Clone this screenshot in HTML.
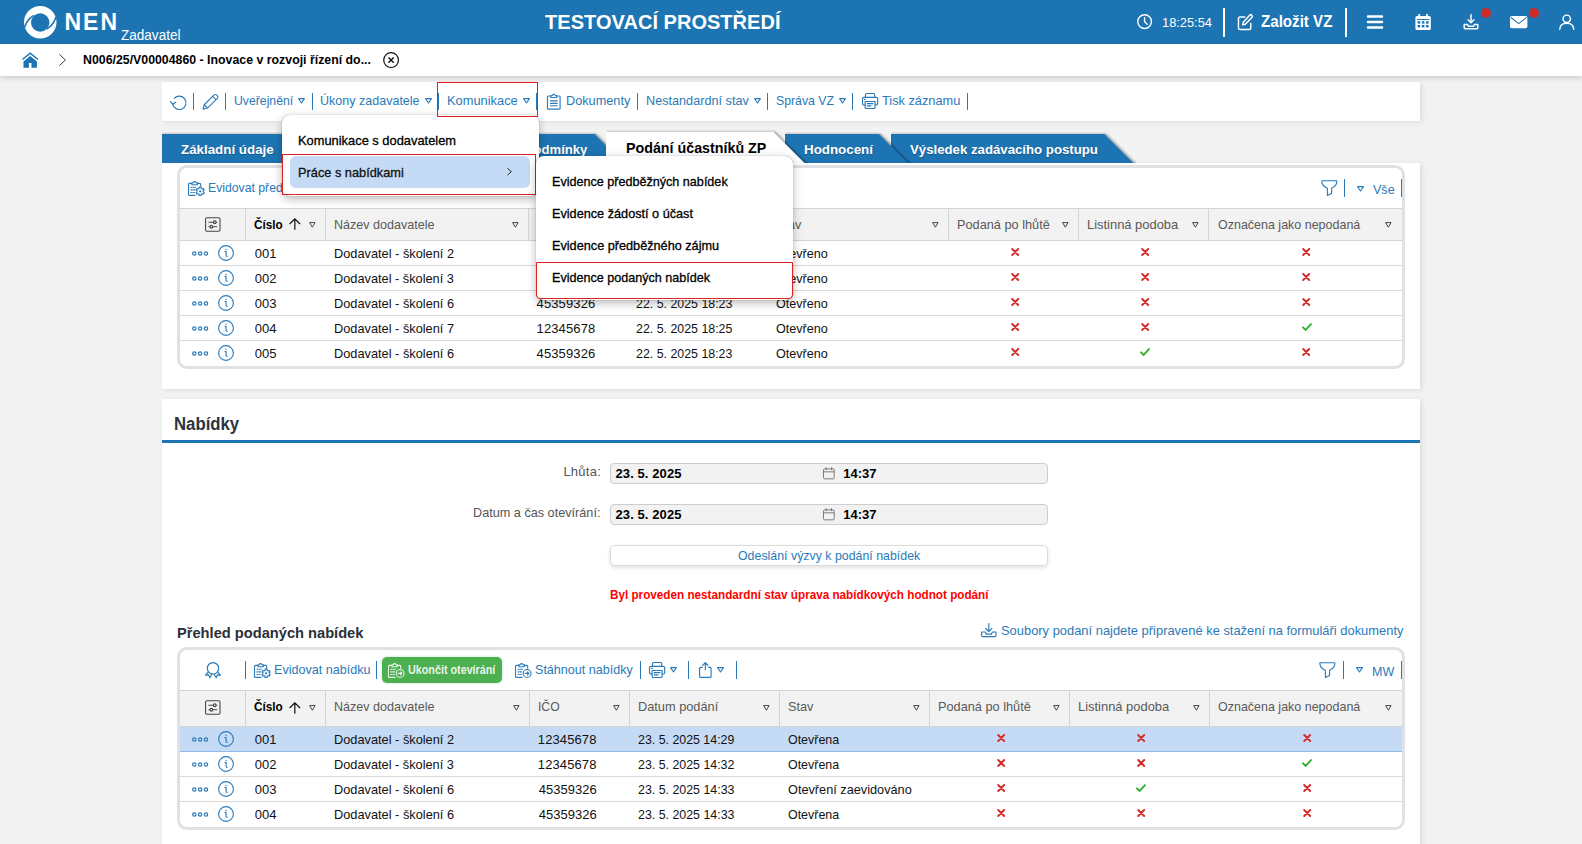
<!DOCTYPE html>
<html lang="cs"><head><meta charset="utf-8"><title>NEN</title>
<style>
*{box-sizing:border-box;margin:0;padding:0}
html,body{width:1582px;height:844px;overflow:hidden;background:#f2f2f2;font-family:"Liberation Sans",sans-serif;font-size:13px;color:#111}
.abs{position:absolute}
#hdr{position:absolute;left:0;top:0;width:1582px;height:44px;background:#1d74b3;color:#fff}
#bc{position:absolute;left:0;top:44px;width:1582px;height:32px;background:#fff;box-shadow:0 2px 5px rgba(0,0,0,.16)}
.t{position:absolute;white-space:nowrap;line-height:1;transform-origin:0 50%}
.panel{position:absolute;background:#fff;box-shadow:2px 1px 5px rgba(0,0,0,.09)}
.sep{position:absolute;width:1.3px;background:#2a7ab9}
.grid{position:absolute;border:3px solid #dfe1e4;border-radius:10px;background:#fff;overflow:hidden}
.gh{position:absolute;left:0;right:0;background:#f2f2f2;border-top:1px solid #d4d4d4;border-bottom:1px solid #d4d4d4}
.vl{position:absolute;width:1px;background:#d4d4d4}
.hl{position:absolute;left:0;right:0;height:1px;background:#d9d9d9}
svg{position:absolute;overflow:visible}
.menu{position:absolute;background:#fff;border-radius:8px;box-shadow:0 3px 10px rgba(0,0,0,.28),0 0 1px rgba(0,0,0,.45)}
.red{position:absolute;border:1px solid #e02020}
</style></head><body>
<div id="hdr"><svg style="left:23.800px;top:5.600px" width="32.500" height="32.500" viewBox="0 0 32.500 32.500">
<circle cx="16.250" cy="16.250" r="16.250" fill="#fff"/>
<circle cx="16.200" cy="16.450" r="9.250" fill="#1d74b3"/>
<path d="M-0.500 22.800C1 16.500 4.200 11.700 9.500 8.800L10.100 9.900C5.800 12.600 2.800 16.800 1.500 21.300z" fill="#1d74b3"/>
<path d="M33 9.700C31.500 16 28.300 20.800 23 23.700L22.400 22.600C26.700 19.900 29.700 15.700 31 11.200z" fill="#1d74b3"/>
</svg><div class="t" id="nen" style="left:64.4px;top:11px;font-size:23px;color:#fff;font-weight:bold;letter-spacing:2.069px;">NEN</div><div class="t" id="zad" style="left:121.3px;top:28px;font-size:14px;color:#fff;transform:scaleX(0.9674);">Zadavatel</div><div class="t" id="ttl" style="left:545.1px;top:12px;font-size:20px;color:#fff;font-weight:bold;letter-spacing:0.031px;">TESTOVACÍ PROSTŘEDÍ</div><svg style="left:1137.400px;top:14.100px" width="15.200" height="15.200" viewBox="0 0 16 16" fill="none" stroke="#fff" stroke-width="1.500"><circle cx="8" cy="8" r="7.200"/><path d="M8 3.800v4.400l2.800 2.600" stroke-linecap="round"/></svg><div class="t" id="clk" style="left:1161.5px;top:16px;font-size:13px;color:#fff;transform:scaleX(0.9866);">18:25:54</div><div class="abs" style="left:1223px;top:8px;width:2px;height:28.500px;background:#fff"></div><svg style="left:1237px;top:13.500px" width="16.500" height="16.500" viewBox="0 0 17 17" fill="none" stroke="#fff" stroke-width="1.500" stroke-linejoin="round" stroke-linecap="round"><path d="M8 3H3.200A1.700 1.700 0 0 0 1.500 4.700V14.300A1.700 1.700 0 0 0 3.200 16H12.500A1.700 1.700 0 0 0 14.200 14.300V9.500"/><path d="M13 1.200a1.500 1.500 0 0 1 2.300 2.300L8.600 10.500 5.800 11.200 6.500 8.400Z"/></svg><div class="t" id="zal" style="left:1260.7px;top:14px;font-size:16px;color:#fff;font-weight:bold;transform:scaleX(0.9455);">Založit VZ</div><div class="abs" style="left:1345px;top:8px;width:2px;height:28.500px;background:#fff"></div><svg style="left:1367px;top:15px" width="16" height="14" viewBox="0 0 16 14" stroke="#fff" stroke-width="2.500" stroke-linecap="round"><path d="M1 1.400h14M1 6.900h14M1 12.400h14"/></svg><svg style="left:1414.800px;top:13.900px" width="16.200" height="16" viewBox="0 0 16 16"><path d="M0.300 3.500a1.500 1.500 0 0 1 1.500-1.500H14.200a1.500 1.500 0 0 1 1.500 1.500V14.500a1.500 1.500 0 0 1-1.500 1.500H1.800a1.500 1.500 0 0 1-1.500-1.500z" fill="#fff"/><rect x="3.200" y="0" width="1.800" height="4" fill="#fff"/><rect x="11" y="0" width="1.800" height="4" fill="#fff"/><g fill="#1d74b3"><rect x="1.800" y="5" width="12.400" height="1"/><rect x="2.500" y="7.200" width="2.600" height="2.400"/><rect x="6.700" y="7.200" width="2.600" height="2.400"/><rect x="10.900" y="7.200" width="2.600" height="2.400"/><rect x="2.500" y="11" width="2.600" height="2.400"/><rect x="6.700" y="11" width="2.600" height="2.400"/><rect x="10.900" y="11" width="2.600" height="2.400"/></g></svg><svg style="left:1463px;top:14.200px" width="16" height="15.600" viewBox="0 0 16 16" fill="none" stroke="#fff" stroke-width="1.500" stroke-linecap="round" stroke-linejoin="round"><path d="M8 0.800v8M5 6l3 3 3-3"/><path d="M1 10.800v3a1.400 1.400 0 0 0 1.400 1.400h11.200a1.400 1.400 0 0 0 1.400-1.400v-3h-3.500l-1 1.800h-5l-1-1.800z"/></svg><div class="abs" style="left:1481px;top:8px;width:10.200px;height:10.200px;border-radius:6px;background:#cd2a2c"></div><svg style="left:1509.800px;top:15.800px" width="17.400" height="12.200" viewBox="0 0 18 12.500"><rect x="0" y="0" width="18" height="12.500" rx="1.800" fill="#fff"/><path d="M1 1.500l8 6.300 8-6.300" fill="none" stroke="#1d74b3" stroke-width="1.100"/></svg><div class="abs" style="left:1529px;top:8px;width:10.200px;height:10.200px;border-radius:6px;background:#cd2a2c"></div><svg style="left:1559px;top:14.200px" width="15.500" height="16" viewBox="0 0 16 16" fill="none" stroke="#fff" stroke-width="1.500" stroke-linecap="round"><circle cx="8" cy="4.700" r="3.800"/><path d="M0.800 15.500c0.200-4 3-6.300 7.200-6.300s7 2.300 7.200 6.300"/></svg></div><div id="bc"><svg style="left:22px;top:8px" width="16.400" height="16" viewBox="0 0 16.400 16"><path d="M1 7L8.200 1.200L15.400 7" fill="none" stroke="#1d74b3" stroke-width="1.600" stroke-linecap="round" stroke-linejoin="miter"/><path d="M1.500 9.400L8.200 4.100L14.900 9.400V15.800H9.500V11H6.900V15.800H1.500z" fill="#1d74b3"/></svg><svg style="left:59.200px;top:10.100px" width="7" height="11.900" viewBox="0 0 7 11.900" fill="none" stroke="#3a3a3a" stroke-width="1"><path d="M0.400 0.300l6 5.650-6 5.650"/></svg></div><div class="t" id="bct" style="left:82.6px;top:54px;font-size:12.5px;color:#000;font-weight:bold;transform:scaleX(0.9867);">N006/25/V00004860 - Inovace v rozvoji řízení do...</div><svg style="left:383.100px;top:51.700px" width="16.200" height="16.200" viewBox="0 0 16.200 16.200" fill="none" stroke="#111" stroke-width="1.200"><circle cx="8.100" cy="8.100" r="7.400"/><path d="M5.500 5.500l5.200 5.200M10.700 5.500l-5.200 5.200" stroke-width="1.400"/></svg><div class="panel" style="left:162px;top:82px;width:1258px;height:39px"></div><svg style="left:170px;top:94.500px" width="16.200" height="15" viewBox="0 0 16.200 15" fill="none" stroke="#2a7ab9" stroke-width="1.150" stroke-linecap="round" stroke-linejoin="round"><path d="M2.700 9.200A6.700 6.700 0 1 0 4.300 3.300"/><path d="M0.500 6.500l2.200 2.900 2.900-2.200"/></svg><svg style="left:201.700px;top:93.800px" width="16.500" height="16.200" viewBox="0 0 17 17" fill="none" stroke="#2a7ab9" stroke-width="1.150" stroke-linejoin="round"><path d="M1 16l1.200-4.700L12.500 1a1.800 1.800 0 0 1 2.600 0l0.900 0.900a1.800 1.800 0 0 1 0 2.600L5.700 14.800z"/><path d="M2.200 11.300l3.500 3.500M11 2.500l3.500 3.500"/></svg><div class="sep" style="left:192.75px;top:92.5px;height:17.5px"></div><div class="sep" style="left:224.85px;top:92.5px;height:17.5px"></div><div class="sep" style="left:311.55px;top:92.5px;height:17.5px"></div><div class="sep" style="left:437.75px;top:92.5px;height:17.5px"></div><div class="sep" style="left:535.85px;top:92.5px;height:17.5px"></div><div class="sep" style="left:636.75px;top:92.5px;height:17.5px"></div><div class="sep" style="left:766.85px;top:92.5px;height:17.5px"></div><div class="sep" style="left:852.05px;top:92.5px;height:17.5px"></div><div class="sep" style="left:967.15px;top:92.5px;height:17.5px"></div><div class="t" id="tb0" style="left:234.0px;top:94px;font-size:13px;color:#2a7ab9;transform:scaleX(0.9411);">Uveřejnění</div><svg style="left:297.8px;top:98.3px" width="7" height="5.6" viewBox="0 0 7 5.6" fill="none" stroke="#2a7ab9" stroke-width="1.1" stroke-linejoin="round"><path d="M0.600 0.600h5.80l-2.90 4.40z"/></svg><div class="t" id="tb1" style="left:320.3px;top:94px;font-size:13px;color:#2a7ab9;transform:scaleX(0.9637);">Úkony zadavatele</div><svg style="left:424.5px;top:98.3px" width="7" height="5.6" viewBox="0 0 7 5.6" fill="none" stroke="#2a7ab9" stroke-width="1.1" stroke-linejoin="round"><path d="M0.600 0.600h5.80l-2.90 4.40z"/></svg><div class="t" id="tb2" style="left:447.3px;top:94px;font-size:13px;color:#2a7ab9;transform:scaleX(0.9882);">Komunikace</div><svg style="left:522.8px;top:98.3px" width="7" height="5.6" viewBox="0 0 7 5.6" fill="none" stroke="#2a7ab9" stroke-width="1.1" stroke-linejoin="round"><path d="M0.600 0.600h5.80l-2.90 4.40z"/></svg><div class="t" id="tb3" style="left:566.4px;top:94px;font-size:13px;color:#2a7ab9;transform:scaleX(0.9777);">Dokumenty</div><div class="t" id="tb4" style="left:645.6px;top:94px;font-size:13px;color:#2a7ab9;transform:scaleX(0.9741);">Nestandardní stav</div><svg style="left:753.5px;top:98.3px" width="7" height="5.6" viewBox="0 0 7 5.6" fill="none" stroke="#2a7ab9" stroke-width="1.1" stroke-linejoin="round"><path d="M0.600 0.600h5.80l-2.90 4.40z"/></svg><div class="t" id="tb5" style="left:776.0px;top:94px;font-size:13px;color:#2a7ab9;transform:scaleX(0.9442);">Správa VZ</div><svg style="left:838.6px;top:98.3px" width="7" height="5.6" viewBox="0 0 7 5.6" fill="none" stroke="#2a7ab9" stroke-width="1.1" stroke-linejoin="round"><path d="M0.600 0.600h5.80l-2.90 4.40z"/></svg><div class="t" id="tb6" style="left:882.4px;top:94px;font-size:13px;color:#2a7ab9;transform:scaleX(0.9820);">Tisk záznamu</div><svg style="left:546.700px;top:92.800px" width="13.600" height="16.800" viewBox="0 0 14 17" fill="none" stroke="#2a7ab9" stroke-width="1.150" stroke-linejoin="round" stroke-linecap="round"><path d="M4 3H1.500a1 1 0 0 0-1 1V15.500a1 1 0 0 0 1 1h11a1 1 0 0 0 1-1V4a1 1 0 0 0-1-1H10"/><path d="M4 4.500V2.700L5.500 2.300a1.600 1.600 0 0 1 3 0L10 2.700v1.800z"/><path d="M3.500 8h7M3.500 10.500h7M3.500 13h7"/></svg><svg style="left:861.8px;top:93.2px" width="16.200" height="16" viewBox="0 0 16.200 16" fill="none" stroke="#2a7ab9" stroke-width="1.150" stroke-linejoin="round" stroke-linecap="round"><path d="M3.500 4.300V1.500a1 1 0 0 1 1-1h7.200a1 1 0 0 1 1 1V4.300"/><path d="M3.100 12H2a1.500 1.500 0 0 1-1.500-1.500V5.800A1.500 1.500 0 0 1 2 4.300H14.200a1.500 1.500 0 0 1 1.500 1.500V10.500A1.500 1.500 0 0 1 14.200 12H13.100"/><path d="M3.100 8.500h10v6a1 1 0 0 1-1 1H4.100a1 1 0 0 1-1-1z"/><path d="M5.200 10.700h5.800M5.200 12.900h3.800M2.500 6.400h0.600"/></svg><svg style="left:890.7px;top:134px" width="250.39999999999986" height="29" viewBox="0 0 250.39999999999986 29"><path d="M212.9 0H214.8L243.8 29H241.9z" fill="#000" opacity="0.26"/><path d="M214.3 0H216.2L245.2 29H243.3z" fill="#000" opacity="0.15"/><path d="M215.7 0H217.6L246.6 29H244.7z" fill="#000" opacity="0.07"/><path d="M1 -1.500H214.9L216.4 0H1z" fill="#5a4a40" opacity="0.200"/><path d="M0 0H213.39999999999986L242.39999999999986 29H0z" fill="#1d74b3"/></svg><div class="t" id="tab5" style="left:909.5px;top:143px;font-size:13.5px;color:#fff;font-weight:bold;transform:scaleX(0.9783);text-shadow:0 1px 1px rgba(0,0,0,.25);">Výsledek zadávacího postupu</div><svg style="left:784.5px;top:134px" width="131.0" height="29" viewBox="0 0 131.0 29"><path d="M93.5 0H95.4L124.4 29H122.5z" fill="#000" opacity="0.26"/><path d="M94.9 0H96.8L125.8 29H123.9z" fill="#000" opacity="0.15"/><path d="M96.3 0H98.2L127.2 29H125.3z" fill="#000" opacity="0.07"/><path d="M1 -1.500H95.5L97.0 0H1z" fill="#5a4a40" opacity="0.200"/><path d="M0 0H94.0L123.0 29H0z" fill="#1d74b3"/></svg><div class="t" id="tab4" style="left:804.4px;top:143px;font-size:13.5px;color:#fff;font-weight:bold;transform:scaleX(0.9889);text-shadow:0 1px 1px rgba(0,0,0,.25);">Hodnocení</div><svg style="left:400px;top:134px" width="231.60000000000002" height="29" viewBox="0 0 231.60000000000002 29"><path d="M194.1 0H196.0L225.0 29H223.1z" fill="#000" opacity="0.26"/><path d="M195.5 0H197.4L226.4 29H224.5z" fill="#000" opacity="0.15"/><path d="M196.9 0H198.8L227.8 29H225.9z" fill="#000" opacity="0.07"/><path d="M1 -1.500H196.1L197.6 0H1z" fill="#5a4a40" opacity="0.200"/><path d="M0 0H194.60000000000002L223.60000000000002 29H0z" fill="#1d74b3"/></svg><div class="t" id="tab2" style="left:466.3px;top:143px;font-size:13.5px;color:#fff;font-weight:bold;transform:scaleX(0.9680);text-shadow:0 1px 1px rgba(0,0,0,.25);">Zadávací podmínky</div><svg style="left:606px;top:132px" width="206.5" height="31" viewBox="0 0 206.5 31"><path d="M167.0 0H168.9L199.9 31H198.0z" fill="#000" opacity="0.26"/><path d="M168.4 0H170.3L201.3 31H199.4z" fill="#000" opacity="0.15"/><path d="M169.8 0H171.7L202.7 31H200.8z" fill="#000" opacity="0.07"/><path d="M1 -1.500H169.0L170.5 0H1z" fill="#5a4a40" opacity="0.200"/><path d="M0 0H167.5L198.5 31H0z" fill="#fff"/></svg><div class="t" id="tab3" style="left:625.9px;top:140px;font-size:15px;color:#000;font-weight:bold;transform:scaleX(0.9509);">Podání účastníků ZP</div><svg style="left:162px;top:134px" width="255" height="29" viewBox="0 0 255 29"><path d="M217.5 0H219.4L248.4 29H246.5z" fill="#000" opacity="0.26"/><path d="M218.9 0H220.8L249.8 29H247.9z" fill="#000" opacity="0.15"/><path d="M220.3 0H222.2L251.2 29H249.3z" fill="#000" opacity="0.07"/><path d="M1 -1.500H219.5L221.0 0H1z" fill="#5a4a40" opacity="0.200"/><path d="M0 0H218L247 29H0z" fill="#1d74b3"/></svg><div class="t" id="tab1" style="left:181.2px;top:143px;font-size:13.5px;color:#fff;font-weight:bold;transform:scaleX(0.9885);text-shadow:0 1px 1px rgba(0,0,0,.25);">Základní údaje</div><div class="panel" style="left:162px;top:163px;width:1258px;height:226px"></div><div class="grid" style="left:177px;top:165px;width:1228px;height:203.7px"><div class="gh" style="top:39.5px;height:33.30000000000001px"></div><div class="vl" style="left:64.9px;top:39.5px;height:33.30000000000001px"></div><div class="vl" style="left:144.7px;top:39.5px;height:33.30000000000001px"></div><div class="vl" style="left:347.8px;top:39.5px;height:33.30000000000001px"></div><div class="vl" style="left:447.5px;top:39.5px;height:33.30000000000001px"></div><div class="vl" style="left:587.5px;top:39.5px;height:33.30000000000001px"></div><div class="vl" style="left:768.1px;top:39.5px;height:33.30000000000001px"></div><div class="vl" style="left:897.7px;top:39.5px;height:33.30000000000001px"></div><div class="vl" style="left:1028.1px;top:39.5px;height:33.30000000000001px"></div><div class="hl" style="top:97.19999999999999px"></div><div class="hl" style="top:122.19999999999999px"></div><div class="hl" style="top:147.2px"></div><div class="hl" style="top:172.2px"></div></div><svg style="left:205.3px;top:216.55px" width="15.600" height="15" viewBox="0 0 16 15" fill="none" stroke="#444" stroke-width="1.100"><rect x="0.600" y="0.600" width="14.800" height="13.800" rx="1.500"/><path d="M3.500 5.200h9M3.500 9.800h9"/><circle cx="10" cy="5.200" r="1.400" fill="#f2f2f2"/><circle cx="6.500" cy="9.800" r="1.400" fill="#f2f2f2"/></svg><div class="t" id="ah0" style="left:253.7px;top:218px;font-size:13px;color:#000;font-weight:bold;transform:scaleX(0.9033);">Číslo</div><svg style="left:289px;top:218.25px" width="11.700" height="11.700" viewBox="0 0 11.700 11.700" fill="none" stroke="#111" stroke-width="1.200"><path d="M5.850 11.700V1M0.600 6l5.250-5.200 5.250 5.200"/></svg><svg style="left:308.8px;top:221.55px" width="6.7" height="5.8" viewBox="0 0 6.7 5.8" fill="none" stroke="#444" stroke-width="1" stroke-linejoin="round"><path d="M0.600 0.600h5.50l-2.75 4.60z"/></svg><div class="t" id="ah1" style="left:333.5px;top:218px;font-size:13px;color:#595959;transform:scaleX(0.9647);">Název dodavatele</div><svg style="left:511.69999999999993px;top:221.55px" width="6.7" height="5.8" viewBox="0 0 6.7 5.8" fill="none" stroke="#444" stroke-width="1" stroke-linejoin="round"><path d="M0.600 0.600h5.50l-2.75 4.60z"/></svg><div class="t" id="ah2" style="left:536.6px;top:218px;font-size:13px;color:#595959;transform:scaleX(0.9343);">IČO</div><svg style="left:611.4px;top:221.55px" width="6.7" height="5.8" viewBox="0 0 6.7 5.8" fill="none" stroke="#444" stroke-width="1" stroke-linejoin="round"><path d="M0.600 0.600h5.50l-2.75 4.60z"/></svg><div class="t" id="ah3" style="left:636.3px;top:218px;font-size:13px;color:#595959;transform:scaleX(0.9822);">Datum podání</div><svg style="left:751.4px;top:221.55px" width="6.7" height="5.8" viewBox="0 0 6.7 5.8" fill="none" stroke="#444" stroke-width="1" stroke-linejoin="round"><path d="M0.600 0.600h5.50l-2.75 4.60z"/></svg><div class="t" id="ah4" style="left:776.3px;top:218px;font-size:13px;color:#595959;transform:scaleX(0.9782);">Stav</div><svg style="left:932.0px;top:221.55px" width="6.7" height="5.8" viewBox="0 0 6.7 5.8" fill="none" stroke="#444" stroke-width="1" stroke-linejoin="round"><path d="M0.600 0.600h5.50l-2.75 4.60z"/></svg><div class="t" id="ah5" style="left:956.9px;top:218px;font-size:13px;color:#595959;transform:scaleX(0.9800);">Podaná po lhůtě</div><svg style="left:1061.6000000000001px;top:221.55px" width="6.7" height="5.8" viewBox="0 0 6.7 5.8" fill="none" stroke="#444" stroke-width="1" stroke-linejoin="round"><path d="M0.600 0.600h5.50l-2.75 4.60z"/></svg><div class="t" id="ah6" style="left:1086.5px;top:218px;font-size:13px;color:#595959;transform:scaleX(0.9939);">Listinná podoba</div><svg style="left:1192.0px;top:221.55px" width="6.7" height="5.8" viewBox="0 0 6.7 5.8" fill="none" stroke="#444" stroke-width="1" stroke-linejoin="round"><path d="M0.600 0.600h5.50l-2.75 4.60z"/></svg><div class="t" id="ah7" style="left:1217.9px;top:218px;font-size:13px;color:#595959;transform:scaleX(0.9602);">Označena jako nepodaná</div><svg style="left:1384.8000000000002px;top:221.55px" width="6.7" height="5.8" viewBox="0 0 6.7 5.8" fill="none" stroke="#444" stroke-width="1" stroke-linejoin="round"><path d="M0.600 0.600h5.50l-2.75 4.60z"/></svg><svg style="left:191.8px;top:250.95px" width="16.300" height="5" viewBox="0 0 16.300 5" fill="none" stroke="#2a7ab9" stroke-width="1.150"><circle cx="2.3" cy="2.500" r="1.700"/><circle cx="8.149999999999999" cy="2.500" r="1.700"/><circle cx="14.0" cy="2.500" r="1.700"/></svg><svg style="left:217.8px;top:244.95px" width="16" height="16" viewBox="0 0 16 16" fill="none" stroke="#2a7ab9" stroke-width="1.100"><circle cx="8" cy="8" r="7.400"/><path d="M7 6.600h1.100v3.900q0 0.900 1 0.900" stroke-linecap="round" stroke-linejoin="round"/><circle cx="8" cy="4.500" r="0.700" fill="#2a7ab9" stroke="none"/></svg><div class="t" id="ar0c0" style="left:254.7px;top:247px;font-size:13px;color:#111;">001</div><div class="t" id="ar0c1" style="left:333.5px;top:247px;font-size:13px;color:#111;transform:scaleX(0.9827);">Dodavatel - školení 2</div><div class="t" id="ar0c2" style="left:536.6px;top:247px;font-size:13px;color:#111;letter-spacing:0.109px;">12345678</div><div class="t" id="ar0c3" style="left:636.3px;top:247px;font-size:13px;color:#111;transform:scaleX(0.9522);">22. 5. 2025 18:20</div><div class="t" id="ar0c4" style="left:776.3px;top:247px;font-size:13px;color:#111;transform:scaleX(0.9691);">Otevřeno</div><svg style="left:1010.5000000000001px;top:248.45px" width="8.400" height="8" viewBox="0 0 8 8" stroke="#d32a2a" stroke-width="1.900" stroke-linecap="round"><path d="M1 1l6 6M7 1l-6 6"/></svg><svg style="left:1140.5px;top:248.45px" width="8.400" height="8" viewBox="0 0 8 8" stroke="#d32a2a" stroke-width="1.900" stroke-linecap="round"><path d="M1 1l6 6M7 1l-6 6"/></svg><svg style="left:1302.1px;top:248.45px" width="8.400" height="8" viewBox="0 0 8 8" stroke="#d32a2a" stroke-width="1.900" stroke-linecap="round"><path d="M1 1l6 6M7 1l-6 6"/></svg><svg style="left:191.8px;top:275.9px" width="16.300" height="5" viewBox="0 0 16.300 5" fill="none" stroke="#2a7ab9" stroke-width="1.150"><circle cx="2.3" cy="2.500" r="1.700"/><circle cx="8.149999999999999" cy="2.500" r="1.700"/><circle cx="14.0" cy="2.500" r="1.700"/></svg><svg style="left:217.8px;top:269.9px" width="16" height="16" viewBox="0 0 16 16" fill="none" stroke="#2a7ab9" stroke-width="1.100"><circle cx="8" cy="8" r="7.400"/><path d="M7 6.600h1.100v3.900q0 0.900 1 0.900" stroke-linecap="round" stroke-linejoin="round"/><circle cx="8" cy="4.500" r="0.700" fill="#2a7ab9" stroke="none"/></svg><div class="t" id="ar1c0" style="left:254.7px;top:272px;font-size:13px;color:#111;">002</div><div class="t" id="ar1c1" style="left:333.5px;top:272px;font-size:13px;color:#111;transform:scaleX(0.9816);">Dodavatel - školení 3</div><div class="t" id="ar1c2" style="left:536.6px;top:272px;font-size:13px;color:#111;letter-spacing:0.109px;">12345678</div><div class="t" id="ar1c3" style="left:636.3px;top:272px;font-size:13px;color:#111;transform:scaleX(0.9522);">22. 5. 2025 18:22</div><div class="t" id="ar1c4" style="left:776.3px;top:272px;font-size:13px;color:#111;transform:scaleX(0.9691);">Otevřeno</div><svg style="left:1010.5000000000001px;top:273.4px" width="8.400" height="8" viewBox="0 0 8 8" stroke="#d32a2a" stroke-width="1.900" stroke-linecap="round"><path d="M1 1l6 6M7 1l-6 6"/></svg><svg style="left:1140.5px;top:273.4px" width="8.400" height="8" viewBox="0 0 8 8" stroke="#d32a2a" stroke-width="1.900" stroke-linecap="round"><path d="M1 1l6 6M7 1l-6 6"/></svg><svg style="left:1302.1px;top:273.4px" width="8.400" height="8" viewBox="0 0 8 8" stroke="#d32a2a" stroke-width="1.900" stroke-linecap="round"><path d="M1 1l6 6M7 1l-6 6"/></svg><svg style="left:191.8px;top:300.9px" width="16.300" height="5" viewBox="0 0 16.300 5" fill="none" stroke="#2a7ab9" stroke-width="1.150"><circle cx="2.3" cy="2.500" r="1.700"/><circle cx="8.149999999999999" cy="2.500" r="1.700"/><circle cx="14.0" cy="2.500" r="1.700"/></svg><svg style="left:217.8px;top:294.9px" width="16" height="16" viewBox="0 0 16 16" fill="none" stroke="#2a7ab9" stroke-width="1.100"><circle cx="8" cy="8" r="7.400"/><path d="M7 6.600h1.100v3.900q0 0.900 1 0.900" stroke-linecap="round" stroke-linejoin="round"/><circle cx="8" cy="4.500" r="0.700" fill="#2a7ab9" stroke="none"/></svg><div class="t" id="ar2c0" style="left:254.7px;top:297px;font-size:13px;color:#111;">003</div><div class="t" id="ar2c1" style="left:333.5px;top:297px;font-size:13px;color:#111;transform:scaleX(0.9833);">Dodavatel - školení 6</div><div class="t" id="ar2c2" style="left:536.6px;top:297px;font-size:13px;color:#111;letter-spacing:0.109px;">45359326</div><div class="t" id="ar2c3" style="left:636.3px;top:297px;font-size:13px;color:#111;transform:scaleX(0.9522);">22. 5. 2025 18:23</div><div class="t" id="ar2c4" style="left:776.3px;top:297px;font-size:13px;color:#111;transform:scaleX(0.9691);">Otevřeno</div><svg style="left:1010.5000000000001px;top:298.4px" width="8.400" height="8" viewBox="0 0 8 8" stroke="#d32a2a" stroke-width="1.900" stroke-linecap="round"><path d="M1 1l6 6M7 1l-6 6"/></svg><svg style="left:1140.5px;top:298.4px" width="8.400" height="8" viewBox="0 0 8 8" stroke="#d32a2a" stroke-width="1.900" stroke-linecap="round"><path d="M1 1l6 6M7 1l-6 6"/></svg><svg style="left:1302.1px;top:298.4px" width="8.400" height="8" viewBox="0 0 8 8" stroke="#d32a2a" stroke-width="1.900" stroke-linecap="round"><path d="M1 1l6 6M7 1l-6 6"/></svg><svg style="left:191.8px;top:325.9px" width="16.300" height="5" viewBox="0 0 16.300 5" fill="none" stroke="#2a7ab9" stroke-width="1.150"><circle cx="2.3" cy="2.500" r="1.700"/><circle cx="8.149999999999999" cy="2.500" r="1.700"/><circle cx="14.0" cy="2.500" r="1.700"/></svg><svg style="left:217.8px;top:319.9px" width="16" height="16" viewBox="0 0 16 16" fill="none" stroke="#2a7ab9" stroke-width="1.100"><circle cx="8" cy="8" r="7.400"/><path d="M7 6.600h1.100v3.900q0 0.900 1 0.900" stroke-linecap="round" stroke-linejoin="round"/><circle cx="8" cy="4.500" r="0.700" fill="#2a7ab9" stroke="none"/></svg><div class="t" id="ar3c0" style="left:254.7px;top:322px;font-size:13px;color:#111;">004</div><div class="t" id="ar3c1" style="left:333.5px;top:322px;font-size:13px;color:#111;transform:scaleX(0.9827);">Dodavatel - školení 7</div><div class="t" id="ar3c2" style="left:536.6px;top:322px;font-size:13px;color:#111;letter-spacing:0.109px;">12345678</div><div class="t" id="ar3c3" style="left:636.3px;top:322px;font-size:13px;color:#111;transform:scaleX(0.9522);">22. 5. 2025 18:25</div><div class="t" id="ar3c4" style="left:776.3px;top:322px;font-size:13px;color:#111;transform:scaleX(0.9691);">Otevřeno</div><svg style="left:1010.5000000000001px;top:323.4px" width="8.400" height="8" viewBox="0 0 8 8" stroke="#d32a2a" stroke-width="1.900" stroke-linecap="round"><path d="M1 1l6 6M7 1l-6 6"/></svg><svg style="left:1140.5px;top:323.4px" width="8.400" height="8" viewBox="0 0 8 8" stroke="#d32a2a" stroke-width="1.900" stroke-linecap="round"><path d="M1 1l6 6M7 1l-6 6"/></svg><svg style="left:1301.8px;top:323.4px" width="10" height="8" viewBox="0 0 10 8" fill="none" stroke="#2fb12f" stroke-width="1.900" stroke-linecap="round"><path d="M1 4.300l2.600 2.600 5.400-5.800"/></svg><svg style="left:191.8px;top:350.9px" width="16.300" height="5" viewBox="0 0 16.300 5" fill="none" stroke="#2a7ab9" stroke-width="1.150"><circle cx="2.3" cy="2.500" r="1.700"/><circle cx="8.149999999999999" cy="2.500" r="1.700"/><circle cx="14.0" cy="2.500" r="1.700"/></svg><svg style="left:217.8px;top:344.9px" width="16" height="16" viewBox="0 0 16 16" fill="none" stroke="#2a7ab9" stroke-width="1.100"><circle cx="8" cy="8" r="7.400"/><path d="M7 6.600h1.100v3.900q0 0.900 1 0.900" stroke-linecap="round" stroke-linejoin="round"/><circle cx="8" cy="4.500" r="0.700" fill="#2a7ab9" stroke="none"/></svg><div class="t" id="ar4c0" style="left:254.7px;top:347px;font-size:13px;color:#111;">005</div><div class="t" id="ar4c1" style="left:333.5px;top:347px;font-size:13px;color:#111;transform:scaleX(0.9833);">Dodavatel - školení 6</div><div class="t" id="ar4c2" style="left:536.6px;top:347px;font-size:13px;color:#111;letter-spacing:0.109px;">45359326</div><div class="t" id="ar4c3" style="left:636.3px;top:347px;font-size:13px;color:#111;transform:scaleX(0.9522);">22. 5. 2025 18:23</div><div class="t" id="ar4c4" style="left:776.3px;top:347px;font-size:13px;color:#111;transform:scaleX(0.9691);">Otevřeno</div><svg style="left:1010.5000000000001px;top:348.4px" width="8.400" height="8" viewBox="0 0 8 8" stroke="#d32a2a" stroke-width="1.900" stroke-linecap="round"><path d="M1 1l6 6M7 1l-6 6"/></svg><svg style="left:1140.2px;top:348.4px" width="10" height="8" viewBox="0 0 10 8" fill="none" stroke="#2fb12f" stroke-width="1.900" stroke-linecap="round"><path d="M1 4.300l2.600 2.600 5.400-5.800"/></svg><svg style="left:1302.1px;top:348.4px" width="8.400" height="8" viewBox="0 0 8 8" stroke="#d32a2a" stroke-width="1.900" stroke-linecap="round"><path d="M1 1l6 6M7 1l-6 6"/></svg><svg style="left:187.8px;top:180px;color:#2a7ab9" width="17" height="17" viewBox="0 0 17 17" fill="none" stroke="#2a7ab9" stroke-width="1.100" stroke-linejoin="round" stroke-linecap="round"><path d="M9.300 3.400H11.700a1 1 0 0 1 1 1V6.300M7 15.400H1.500a1 1 0 0 1-1-1V4.400a1 1 0 0 1 1-1H3.900"/><path d="M3.900 4.700V2.900L5.300 2.500a1.400 1.400 0 0 1 2.600 0L9.300 2.900V4.700z"/><path d="M2.900 7.300h0.700M4.800 7.300h2.600M2.900 9.900h0.700M4.800 9.900h1.800M2.900 12.500h0.700M4.800 12.500h1.400"/><path d="M11.12 7.11L13.08 7.11L13.12 8.37L14.13 8.95L15.23 8.36L16.22 10.06L15.15 10.72L15.15 11.88L16.22 12.54L15.23 14.24L14.13 13.65L13.12 14.23L13.08 15.49L11.12 15.49L11.08 14.23L10.07 13.65L8.97 14.24L7.98 12.54L9.05 11.88L9.05 10.72L7.98 10.06L8.97 8.36L10.07 8.95L11.08 8.37z"/><circle cx="12.100" cy="11.300" r="1.100" fill="currentColor" stroke="none"/></svg><div class="t" id="ev1" style="left:207.7px;top:181px;font-size:13px;color:#2a7ab9;transform:scaleX(0.9403);">Evidovat předběžnou nabídku</div><svg style="left:1320.6px;top:179.5px" width="16.700" height="16" viewBox="0 0 16.700 16" fill="none" stroke="#2a7ab9" stroke-width="1.100" stroke-linejoin="round"><path d="M1.300 0.700H15.400a0.500 0.500 0 0 1 0.500 0.600C15.800 5.200 12.600 7.400 10.600 8.300V13.600L6.400 15.500V8.300C4.100 7.400 0.900 5.200 0.800 1.300a0.500 0.500 0 0 1 0.500-0.600z"/></svg><div class="sep" style="left:1343.95px;top:179px;height:17.5px"></div><svg style="left:1357.4px;top:185.5px" width="7" height="5.6" viewBox="0 0 7 5.6" fill="none" stroke="#2a7ab9" stroke-width="1.1" stroke-linejoin="round"><path d="M0.600 0.600h5.80l-2.90 4.40z"/></svg><div class="t" id="vse" style="left:1373.3px;top:183px;font-size:13px;color:#2a7ab9;transform:scaleX(0.9642);">Vše</div><div class="sep" style="left:1400.75px;top:179px;height:17.5px"></div><div class="panel" style="left:162px;top:399px;width:1258px;height:460px"></div><div class="t" id="nab" style="left:173.9px;top:415px;font-size:18px;color:#2b3440;font-weight:bold;transform:scaleX(0.9305);">Nabídky</div><div class="abs" style="left:162px;top:440px;width:1258px;height:3px;background:#1d74b3"></div><div class="t" id="l1" style="left:563.4px;top:465px;font-size:13px;color:#555;letter-spacing:0.247px;">Lhůta:</div><div class="abs" style="left:610.200px;top:463px;width:437.500px;height:21px;background:#f2f2f2;border:1px solid #cdcdcd;border-radius:4px"></div><div class="t" id="l1d" style="left:615.5px;top:467px;font-size:13px;color:#000;font-weight:bold;letter-spacing:0.090px;">23. 5. 2025</div><svg style="left:823.300px;top:467px" width="11.700" height="12.500" viewBox="0 0 12 12.500" fill="none" stroke="#777" stroke-width="1"><rect x="0.500" y="1.800" width="11" height="10.200" rx="1.200"/><path d="M0.500 4.800h11M3.300 0v3M8.700 0v3"/></svg><div class="t" id="l1t" style="left:843.2px;top:467px;font-size:13px;color:#000;font-weight:bold;letter-spacing:0.037px;">14:37</div><div class="t" id="l2" style="left:472.9px;top:506px;font-size:13px;color:#555;transform:scaleX(0.9743);">Datum a čas otevírání:</div><div class="abs" style="left:610.200px;top:504px;width:437.500px;height:21px;background:#f2f2f2;border:1px solid #cdcdcd;border-radius:4px"></div><div class="t" id="l2d" style="left:615.5px;top:508px;font-size:13px;color:#000;font-weight:bold;letter-spacing:0.090px;">23. 5. 2025</div><svg style="left:823.300px;top:508px" width="11.700" height="12.500" viewBox="0 0 12 12.500" fill="none" stroke="#777" stroke-width="1"><rect x="0.500" y="1.800" width="11" height="10.200" rx="1.200"/><path d="M0.500 4.800h11M3.300 0v3M8.700 0v3"/></svg><div class="t" id="l2t" style="left:843.2px;top:508px;font-size:13px;color:#000;font-weight:bold;letter-spacing:0.037px;">14:37</div><div class="abs" style="left:610.200px;top:545px;width:437.500px;height:21px;background:#fff;border:1px solid #dcdcdc;border-radius:5px;box-shadow:0 2px 4px rgba(0,0,0,.12)"></div><div class="t" id="ode" style="left:737.7px;top:549px;font-size:13px;color:#2a7ab9;transform:scaleX(0.9516);">Odeslání výzvy k podání nabídek</div><div class="t" id="byl" style="left:609.8px;top:589px;font-size:12.5px;color:#f00;font-weight:bold;transform:scaleX(0.9364);">Byl proveden nestandardní stav úprava nabídkových hodnot podání</div><div class="t" id="pre" style="left:176.8px;top:625px;font-size:15px;color:#2a3038;font-weight:bold;transform:scaleX(0.9765);">Přehled podaných nabídek</div><svg style="left:981.100px;top:623.300px" width="15.600" height="14.300" viewBox="0 0 15.600 13.500" preserveAspectRatio="none" fill="none" stroke="#2a7ab9" stroke-width="1.100" stroke-linecap="round" stroke-linejoin="round"><path d="M7.800 0.500v7.500M4.800 5.200l3 3 3-3"/><path d="M0.600 8.500v3.400a1 1 0 0 0 1 1h12.400a1 1 0 0 0 1-1v-3.400h-3.600l-1 2h-5.200l-1-2z"/></svg><div class="t" id="sou" style="left:1000.5px;top:624px;font-size:13px;color:#2a7ab9;transform:scaleX(0.9926);">Soubory podaní najdete připravené ke stažení na formuláři dokumenty</div><div class="grid" style="left:177px;top:647px;width:1228px;height:182.5px"><div class="gh" style="top:39.5px;height:37.0px"></div><div class="vl" style="left:64.9px;top:39.5px;height:37.0px"></div><div class="vl" style="left:144.7px;top:39.5px;height:37.0px"></div><div class="vl" style="left:349.0px;top:39.5px;height:37.0px"></div><div class="vl" style="left:448.8px;top:39.5px;height:37.0px"></div><div class="vl" style="left:599.0px;top:39.5px;height:37.0px"></div><div class="vl" style="left:749.3px;top:39.5px;height:37.0px"></div><div class="vl" style="left:889.1px;top:39.5px;height:37.0px"></div><div class="vl" style="left:1029.0px;top:39.5px;height:37.0px"></div><div class="abs" style="left:0;right:0;top:76.5px;height:25.5px;background:#c5daf5;border-bottom:1px solid #93b9ea"></div><div class="hl" style="top:126.0px"></div><div class="hl" style="top:151.0px"></div></div><svg style="left:205.3px;top:700.4px" width="15.600" height="15" viewBox="0 0 16 15" fill="none" stroke="#444" stroke-width="1.100"><rect x="0.600" y="0.600" width="14.800" height="13.800" rx="1.500"/><path d="M3.500 5.200h9M3.500 9.800h9"/><circle cx="10" cy="5.200" r="1.400" fill="#f2f2f2"/><circle cx="6.500" cy="9.800" r="1.400" fill="#f2f2f2"/></svg><div class="t" id="bh0" style="left:253.7px;top:700px;font-size:13px;color:#000;font-weight:bold;transform:scaleX(0.9033);">Číslo</div><svg style="left:289px;top:702.1px" width="11.700" height="11.700" viewBox="0 0 11.700 11.700" fill="none" stroke="#111" stroke-width="1.200"><path d="M5.850 11.700V1M0.600 6l5.250-5.200 5.250 5.200"/></svg><svg style="left:308.8px;top:705.4px" width="6.7" height="5.8" viewBox="0 0 6.7 5.8" fill="none" stroke="#444" stroke-width="1" stroke-linejoin="round"><path d="M0.600 0.600h5.50l-2.75 4.60z"/></svg><div class="t" id="bh1" style="left:333.5px;top:700px;font-size:13px;color:#595959;transform:scaleX(0.9647);">Název dodavatele</div><svg style="left:512.9px;top:705.4px" width="6.7" height="5.8" viewBox="0 0 6.7 5.8" fill="none" stroke="#444" stroke-width="1" stroke-linejoin="round"><path d="M0.600 0.600h5.50l-2.75 4.60z"/></svg><div class="t" id="bh2" style="left:537.8px;top:700px;font-size:13px;color:#595959;transform:scaleX(0.9343);">IČO</div><svg style="left:612.6999999999999px;top:705.4px" width="6.7" height="5.8" viewBox="0 0 6.7 5.8" fill="none" stroke="#444" stroke-width="1" stroke-linejoin="round"><path d="M0.600 0.600h5.50l-2.75 4.60z"/></svg><div class="t" id="bh3" style="left:637.6px;top:700px;font-size:13px;color:#595959;transform:scaleX(0.9822);">Datum podání</div><svg style="left:762.9px;top:705.4px" width="6.7" height="5.8" viewBox="0 0 6.7 5.8" fill="none" stroke="#444" stroke-width="1" stroke-linejoin="round"><path d="M0.600 0.600h5.50l-2.75 4.60z"/></svg><div class="t" id="bh4" style="left:787.8px;top:700px;font-size:13px;color:#595959;transform:scaleX(0.9782);">Stav</div><svg style="left:913.1999999999999px;top:705.4px" width="6.7" height="5.8" viewBox="0 0 6.7 5.8" fill="none" stroke="#444" stroke-width="1" stroke-linejoin="round"><path d="M0.600 0.600h5.50l-2.75 4.60z"/></svg><div class="t" id="bh5" style="left:938.1px;top:700px;font-size:13px;color:#595959;transform:scaleX(0.9800);">Podaná po lhůtě</div><svg style="left:1053.0px;top:705.4px" width="6.7" height="5.8" viewBox="0 0 6.7 5.8" fill="none" stroke="#444" stroke-width="1" stroke-linejoin="round"><path d="M0.600 0.600h5.50l-2.75 4.60z"/></svg><div class="t" id="bh6" style="left:1077.9px;top:700px;font-size:13px;color:#595959;transform:scaleX(0.9939);">Listinná podoba</div><svg style="left:1192.9px;top:705.4px" width="6.7" height="5.8" viewBox="0 0 6.7 5.8" fill="none" stroke="#444" stroke-width="1" stroke-linejoin="round"><path d="M0.600 0.600h5.50l-2.75 4.60z"/></svg><div class="t" id="bh7" style="left:1217.8px;top:700px;font-size:13px;color:#595959;transform:scaleX(0.9602);">Označena jako nepodaná</div><svg style="left:1384.8000000000002px;top:705.4px" width="6.7" height="5.8" viewBox="0 0 6.7 5.8" fill="none" stroke="#444" stroke-width="1" stroke-linejoin="round"><path d="M0.600 0.600h5.50l-2.75 4.60z"/></svg><svg style="left:191.8px;top:736.7px" width="16.300" height="5" viewBox="0 0 16.300 5" fill="none" stroke="#2a7ab9" stroke-width="1.150"><circle cx="2.3" cy="2.500" r="1.700"/><circle cx="8.149999999999999" cy="2.500" r="1.700"/><circle cx="14.0" cy="2.500" r="1.700"/></svg><svg style="left:217.8px;top:730.7px" width="16" height="16" viewBox="0 0 16 16" fill="none" stroke="#2a7ab9" stroke-width="1.100"><circle cx="8" cy="8" r="7.400"/><path d="M7 6.600h1.100v3.900q0 0.900 1 0.900" stroke-linecap="round" stroke-linejoin="round"/><circle cx="8" cy="4.500" r="0.700" fill="#2a7ab9" stroke="none"/></svg><div class="t" id="br0c0" style="left:254.7px;top:733px;font-size:13px;color:#111;">001</div><div class="t" id="br0c1" style="left:333.5px;top:733px;font-size:13px;color:#111;transform:scaleX(0.9830);">Dodavatel - školení 2</div><div class="t" id="br0c2" style="left:537.8px;top:733px;font-size:13px;color:#111;letter-spacing:0.106px;">12345678</div><div class="t" id="br0c3" style="left:637.6px;top:733px;font-size:13px;color:#111;transform:scaleX(0.9520);">23. 5. 2025 14:29</div><div class="t" id="br0c4" style="left:787.8px;top:733px;font-size:13px;color:#111;transform:scaleX(0.9559);">Otevřena</div><svg style="left:996.8px;top:734.2px" width="8.400" height="8" viewBox="0 0 8 8" stroke="#d32a2a" stroke-width="1.900" stroke-linecap="round"><path d="M1 1l6 6M7 1l-6 6"/></svg><svg style="left:1136.6499999999999px;top:734.2px" width="8.400" height="8" viewBox="0 0 8 8" stroke="#d32a2a" stroke-width="1.900" stroke-linecap="round"><path d="M1 1l6 6M7 1l-6 6"/></svg><svg style="left:1302.55px;top:734.2px" width="8.400" height="8" viewBox="0 0 8 8" stroke="#d32a2a" stroke-width="1.900" stroke-linecap="round"><path d="M1 1l6 6M7 1l-6 6"/></svg><svg style="left:191.8px;top:761.7px" width="16.300" height="5" viewBox="0 0 16.300 5" fill="none" stroke="#2a7ab9" stroke-width="1.150"><circle cx="2.3" cy="2.500" r="1.700"/><circle cx="8.149999999999999" cy="2.500" r="1.700"/><circle cx="14.0" cy="2.500" r="1.700"/></svg><svg style="left:217.8px;top:755.7px" width="16" height="16" viewBox="0 0 16 16" fill="none" stroke="#2a7ab9" stroke-width="1.100"><circle cx="8" cy="8" r="7.400"/><path d="M7 6.600h1.100v3.900q0 0.900 1 0.900" stroke-linecap="round" stroke-linejoin="round"/><circle cx="8" cy="4.500" r="0.700" fill="#2a7ab9" stroke="none"/></svg><div class="t" id="br1c0" style="left:254.7px;top:758px;font-size:13px;color:#111;">002</div><div class="t" id="br1c1" style="left:333.5px;top:758px;font-size:13px;color:#111;transform:scaleX(0.9816);">Dodavatel - školení 3</div><div class="t" id="br1c2" style="left:537.8px;top:758px;font-size:13px;color:#111;letter-spacing:0.109px;">12345678</div><div class="t" id="br1c3" style="left:637.6px;top:758px;font-size:13px;color:#111;transform:scaleX(0.9522);">23. 5. 2025 14:32</div><div class="t" id="br1c4" style="left:787.8px;top:758px;font-size:13px;color:#111;transform:scaleX(0.9562);">Otevřena</div><svg style="left:996.8px;top:759.2px" width="8.400" height="8" viewBox="0 0 8 8" stroke="#d32a2a" stroke-width="1.900" stroke-linecap="round"><path d="M1 1l6 6M7 1l-6 6"/></svg><svg style="left:1136.6499999999999px;top:759.2px" width="8.400" height="8" viewBox="0 0 8 8" stroke="#d32a2a" stroke-width="1.900" stroke-linecap="round"><path d="M1 1l6 6M7 1l-6 6"/></svg><svg style="left:1302.25px;top:759.2px" width="10" height="8" viewBox="0 0 10 8" fill="none" stroke="#2fb12f" stroke-width="1.900" stroke-linecap="round"><path d="M1 4.300l2.600 2.600 5.400-5.800"/></svg><svg style="left:191.8px;top:786.7px" width="16.300" height="5" viewBox="0 0 16.300 5" fill="none" stroke="#2a7ab9" stroke-width="1.150"><circle cx="2.3" cy="2.500" r="1.700"/><circle cx="8.149999999999999" cy="2.500" r="1.700"/><circle cx="14.0" cy="2.500" r="1.700"/></svg><svg style="left:217.8px;top:780.7px" width="16" height="16" viewBox="0 0 16 16" fill="none" stroke="#2a7ab9" stroke-width="1.100"><circle cx="8" cy="8" r="7.400"/><path d="M7 6.600h1.100v3.900q0 0.900 1 0.900" stroke-linecap="round" stroke-linejoin="round"/><circle cx="8" cy="4.500" r="0.700" fill="#2a7ab9" stroke="none"/></svg><div class="t" id="br2c0" style="left:254.7px;top:783px;font-size:13px;color:#111;">003</div><div class="t" id="br2c1" style="left:333.5px;top:783px;font-size:13px;color:#111;transform:scaleX(0.9833);">Dodavatel - školení 6</div><div class="t" id="br2c2" style="left:538.8px;top:783px;font-size:13px;color:#111;letter-spacing:0.007px;">45359326</div><div class="t" id="br2c3" style="left:637.6px;top:783px;font-size:13px;color:#111;transform:scaleX(0.9529);">23. 5. 2025 14:33</div><div class="t" id="br2c4" style="left:787.8px;top:783px;font-size:13px;color:#111;transform:scaleX(0.9787);">Otevření zaevidováno</div><svg style="left:996.8px;top:784.2px" width="8.400" height="8" viewBox="0 0 8 8" stroke="#d32a2a" stroke-width="1.900" stroke-linecap="round"><path d="M1 1l6 6M7 1l-6 6"/></svg><svg style="left:1136.35px;top:784.2px" width="10" height="8" viewBox="0 0 10 8" fill="none" stroke="#2fb12f" stroke-width="1.900" stroke-linecap="round"><path d="M1 4.300l2.600 2.600 5.400-5.800"/></svg><svg style="left:1302.55px;top:784.2px" width="8.400" height="8" viewBox="0 0 8 8" stroke="#d32a2a" stroke-width="1.900" stroke-linecap="round"><path d="M1 1l6 6M7 1l-6 6"/></svg><svg style="left:191.8px;top:811.7px" width="16.300" height="5" viewBox="0 0 16.300 5" fill="none" stroke="#2a7ab9" stroke-width="1.150"><circle cx="2.3" cy="2.500" r="1.700"/><circle cx="8.149999999999999" cy="2.500" r="1.700"/><circle cx="14.0" cy="2.500" r="1.700"/></svg><svg style="left:217.8px;top:805.7px" width="16" height="16" viewBox="0 0 16 16" fill="none" stroke="#2a7ab9" stroke-width="1.100"><circle cx="8" cy="8" r="7.400"/><path d="M7 6.600h1.100v3.900q0 0.900 1 0.900" stroke-linecap="round" stroke-linejoin="round"/><circle cx="8" cy="4.500" r="0.700" fill="#2a7ab9" stroke="none"/></svg><div class="t" id="br3c0" style="left:254.7px;top:808px;font-size:13px;color:#111;">004</div><div class="t" id="br3c1" style="left:333.5px;top:808px;font-size:13px;color:#111;transform:scaleX(0.9833);">Dodavatel - školení 6</div><div class="t" id="br3c2" style="left:538.8px;top:808px;font-size:13px;color:#111;letter-spacing:0.007px;">45359326</div><div class="t" id="br3c3" style="left:637.6px;top:808px;font-size:13px;color:#111;transform:scaleX(0.9529);">23. 5. 2025 14:33</div><div class="t" id="br3c4" style="left:787.8px;top:808px;font-size:13px;color:#111;transform:scaleX(0.9562);">Otevřena</div><svg style="left:996.8px;top:809.2px" width="8.400" height="8" viewBox="0 0 8 8" stroke="#d32a2a" stroke-width="1.900" stroke-linecap="round"><path d="M1 1l6 6M7 1l-6 6"/></svg><svg style="left:1136.6499999999999px;top:809.2px" width="8.400" height="8" viewBox="0 0 8 8" stroke="#d32a2a" stroke-width="1.900" stroke-linecap="round"><path d="M1 1l6 6M7 1l-6 6"/></svg><svg style="left:1302.55px;top:809.2px" width="8.400" height="8" viewBox="0 0 8 8" stroke="#d32a2a" stroke-width="1.900" stroke-linecap="round"><path d="M1 1l6 6M7 1l-6 6"/></svg><svg style="left:205.100px;top:661.900px" width="16" height="16" viewBox="0 0 16 16" fill="none" stroke="#2a7ab9" stroke-width="1.150" stroke-linejoin="round"><circle cx="8" cy="6.300" r="5.700"/><path d="M3.300 9.800L0.600 13.100l3.100-0.200 1.100 2.900 2.400-4M12.700 9.800l2.700 3.300-3.100-0.200-1.100 2.900-2.400-4"/></svg><div class="sep" style="left:244.75px;top:661px;height:17.5px"></div><div class="sep" style="left:375.75px;top:661px;height:17.5px"></div><div class="sep" style="left:639.85px;top:661px;height:17.5px"></div><div class="sep" style="left:687.95px;top:661px;height:17.5px"></div><div class="sep" style="left:735.75px;top:661px;height:17.5px"></div><svg style="left:253.8px;top:662px;color:#2a7ab9" width="17" height="17" viewBox="0 0 17 17" fill="none" stroke="#2a7ab9" stroke-width="1.100" stroke-linejoin="round" stroke-linecap="round"><path d="M9.300 3.400H11.700a1 1 0 0 1 1 1V6.300M7 15.400H1.500a1 1 0 0 1-1-1V4.400a1 1 0 0 1 1-1H3.900"/><path d="M3.900 4.700V2.900L5.300 2.500a1.400 1.400 0 0 1 2.600 0L9.300 2.900V4.700z"/><path d="M2.900 7.300h0.700M4.800 7.300h2.600M2.900 9.900h0.700M4.800 9.900h1.800M2.900 12.500h0.700M4.800 12.500h1.400"/><path d="M11.12 7.11L13.08 7.11L13.12 8.37L14.13 8.95L15.23 8.36L16.22 10.06L15.15 10.72L15.15 11.88L16.22 12.54L15.23 14.24L14.13 13.65L13.12 14.23L13.08 15.49L11.12 15.49L11.08 14.23L10.07 13.65L8.97 14.24L7.98 12.54L9.05 11.88L9.05 10.72L7.98 10.06L8.97 8.36L10.07 8.95L11.08 8.37z"/><circle cx="12.100" cy="11.300" r="1.100" fill="currentColor" stroke="none"/></svg><div class="t" id="ev2" style="left:273.6px;top:663px;font-size:13px;color:#2a7ab9;transform:scaleX(0.9676);">Evidovat nabídku</div><div class="abs" style="left:382px;top:657.300px;width:120.400px;height:25.600px;background:#4caf50;border-radius:5px;box-shadow:0 0 0 1.5px rgba(76,175,80,.13)"></div><svg style="left:388.3px;top:662px" width="17" height="17" viewBox="0 0 17 17" fill="none" stroke="rgba(255,255,255,.9)" stroke-width="1.100" stroke-linejoin="round" stroke-linecap="round"><path d="M9.300 3.400H11.700a1 1 0 0 1 1 1V6.300M7 15.400H1.500a1 1 0 0 1-1-1V4.400a1 1 0 0 1 1-1H3.900"/><path d="M3.900 4.700V2.900L5.300 2.500a1.400 1.400 0 0 1 2.600 0L9.300 2.900V4.700z"/><path d="M2.900 7.300h0.700M4.800 7.300h2.600M2.900 9.900h0.700M4.800 9.900h1.800M2.900 12.500h0.700M4.800 12.500h1.400"/><circle cx="12.100" cy="11.400" r="3.900"/><path d="M10.200 11.400h3.600M12.500 10l1.400 1.400-1.400 1.400"/></svg><div class="t" id="uk" style="left:408.1px;top:664px;font-size:12px;color:rgba(255,255,255,.9);font-weight:bold;transform:scaleX(0.8974);">Ukončit otevírání</div><svg style="left:515.4px;top:662px" width="17" height="17" viewBox="0 0 17 17" fill="none" stroke="#2a7ab9" stroke-width="1.100" stroke-linejoin="round" stroke-linecap="round"><path d="M9.300 3.400H11.700a1 1 0 0 1 1 1V6.300M7 15.400H1.500a1 1 0 0 1-1-1V4.400a1 1 0 0 1 1-1H3.900"/><path d="M3.900 4.700V2.900L5.300 2.500a1.400 1.400 0 0 1 2.600 0L9.300 2.900V4.700z"/><path d="M2.900 7.300h0.700M4.800 7.300h2.600M2.900 9.900h0.700M4.800 9.900h1.800M2.900 12.500h0.700M4.800 12.500h1.400"/><circle cx="12.100" cy="11.400" r="3.900"/><path d="M10.200 11.400h3.600M12.500 10l1.400 1.400-1.400 1.400"/></svg><div class="t" id="st" style="left:534.6px;top:663px;font-size:13px;color:#2a7ab9;transform:scaleX(0.9664);">Stáhnout nabídky</div><svg style="left:649.1px;top:661.9px" width="16.200" height="16" viewBox="0 0 16.200 16" fill="none" stroke="#2a7ab9" stroke-width="1.150" stroke-linejoin="round" stroke-linecap="round"><path d="M3.500 4.300V1.500a1 1 0 0 1 1-1h7.200a1 1 0 0 1 1 1V4.300"/><path d="M3.100 12H2a1.500 1.500 0 0 1-1.500-1.500V5.800A1.500 1.500 0 0 1 2 4.300H14.200a1.500 1.500 0 0 1 1.500 1.500V10.500A1.500 1.500 0 0 1 14.200 12H13.100"/><path d="M3.100 8.500h10v6a1 1 0 0 1-1 1H4.100a1 1 0 0 1-1-1z"/><path d="M5.200 10.700h5.800M5.200 12.900h3.800M2.500 6.400h0.600"/></svg><svg style="left:669.5px;top:667.2px" width="7" height="5.6" viewBox="0 0 7 5.6" fill="none" stroke="#2a7ab9" stroke-width="1.1" stroke-linejoin="round"><path d="M0.600 0.600h5.80l-2.90 4.40z"/></svg><svg style="left:699.2px;top:661.9px" width="12.700" height="16" viewBox="0 0 12.700 16" fill="none" stroke="#2a7ab9" stroke-width="1.150" stroke-linejoin="round" stroke-linecap="round"><path d="M3.200 5.400H1.600a1 1 0 0 0-1 1V14.400a1 1 0 0 0 1 1H11.100a1 1 0 0 0 1-1V6.400a1 1 0 0 0-1-1H9.500"/><path d="M6.350 7.800V0.700M3.650 3.400l2.700-2.700 2.700 2.700"/></svg><svg style="left:717.3px;top:667.2px" width="7" height="5.6" viewBox="0 0 7 5.6" fill="none" stroke="#2a7ab9" stroke-width="1.1" stroke-linejoin="round"><path d="M0.600 0.600h5.80l-2.90 4.40z"/></svg><svg style="left:1319.1px;top:662px" width="16.700" height="16" viewBox="0 0 16.700 16" fill="none" stroke="#2a7ab9" stroke-width="1.100" stroke-linejoin="round"><path d="M1.300 0.700H15.400a0.500 0.500 0 0 1 0.500 0.600C15.800 5.200 12.600 7.400 10.600 8.300V13.600L6.400 15.500V8.300C4.100 7.400 0.900 5.200 0.800 1.300a0.500 0.500 0 0 1 0.500-0.600z"/></svg><div class="sep" style="left:1342.65px;top:661px;height:17.5px"></div><svg style="left:1356px;top:667.2px" width="7" height="5.6" viewBox="0 0 7 5.6" fill="none" stroke="#2a7ab9" stroke-width="1.1" stroke-linejoin="round"><path d="M0.600 0.600h5.80l-2.90 4.40z"/></svg><div class="t" id="mw" style="left:1371.5px;top:665px;font-size:13px;color:#2a7ab9;transform:scaleX(0.9612);">MW</div><div class="sep" style="left:1400.75px;top:661px;height:17.5px"></div><div class="menu" style="left:282px;top:115.300px;width:256.500px;height:80.700px"></div><div class="t" id="m1" style="left:298.3px;top:134px;font-size:13px;color:#000;transform:scaleX(0.9894);-webkit-text-stroke:0.3px #000;">Komunikace s dodavatelem</div><div class="abs" style="left:290.200px;top:156.200px;width:239.800px;height:31.700px;background:#c5daf5;border-radius:6px"></div><div class="t" id="m2" style="left:298.3px;top:166px;font-size:13px;color:#111;transform:scaleX(0.9825);-webkit-text-stroke:0.3px #111;">Práce s nabídkami</div><svg style="left:507px;top:167.600px" width="5" height="7.400" viewBox="0 0 5 7.400" fill="none" stroke="#222" stroke-width="1"><path d="M0.400 0.300l4 3.400-4 3.400"/></svg><div class="red" style="left:282px;top:154px;width:253.500px;height:40.500px"></div><div class="red" style="left:437px;top:81.500px;width:100.800px;height:35.200px"></div><div class="menu" style="left:536px;top:156px;width:256.700px;height:143.700px"></div><div class="t" id="s1" style="left:552.2px;top:175px;font-size:13px;color:#000;transform:scaleX(0.9684);-webkit-text-stroke:0.3px #000;">Evidence předběžných nabídek</div><div class="t" id="s2" style="left:552.2px;top:207px;font-size:13px;color:#000;transform:scaleX(0.9754);-webkit-text-stroke:0.3px #000;">Evidence žádostí o účast</div><div class="t" id="s3" style="left:552.2px;top:239px;font-size:13px;color:#000;transform:scaleX(0.9757);-webkit-text-stroke:0.3px #000;">Evidence předběžného zájmu</div><div class="t" id="s4" style="left:552.2px;top:271px;font-size:13px;color:#000;transform:scaleX(0.9679);-webkit-text-stroke:0.3px #000;">Evidence podaných nabídek</div><div class="red" style="left:536.200px;top:262.200px;width:256.500px;height:37.300px;border-radius:0 0 4px 4px"></div>
</body></html>
